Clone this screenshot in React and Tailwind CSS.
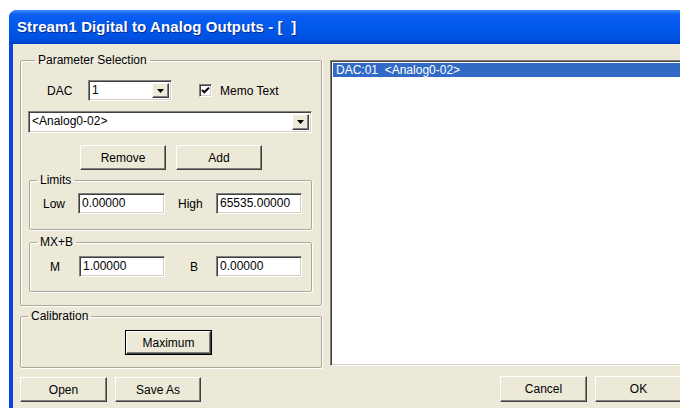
const sunken =
  'border border-t-[#808080] border-l-[#808080] border-r-white border-b-white shadow-[inset_1px_1px_0_#404040,inset_-1px_-1px_0_#d4d0c8]'
const raised =
  'border border-t-white border-l-white border-r-[#404040] border-b-[#404040] shadow-[inset_-1px_-1px_0_#808080] bg-[#ece9d8]'

function Button({ children, className = '', isDefault = false }) {
  if (isDefault) {
    return (
      <div className={`border border-black ${className}`}>
        <div className={`${raised} flex h-full w-full items-center justify-center`}>{children}</div>
      </div>
    )
  }
  return <div className={`${raised} flex items-center justify-center ${className}`}>{children}</div>
}

function Arrow() {
  return (
    <div className={`${raised} flex h-full w-[17px] items-center justify-center`}>
      <svg width="7" height="4" viewBox="0 0 7 4">
        <path d="M0 0h7L3.5 4z" fill="#000" />
      </svg>
    </div>
  )
}

function Combo({ value, className = '' }) {
  return (
    <div className={`${sunken} flex bg-white p-[2px] ${className}`}>
      <div className="flex-1 pl-[1px] leading-[15px]">{value}</div>
      <Arrow />
    </div>
  )
}

function Field({ value, className = '' }) {
  return (
    <div className={`${sunken} bg-white pl-[3px] leading-[19px] ${className}`}>{value}</div>
  )
}

function Group({ title, className = '', children }) {
  return (
    <fieldset
      className={`rounded-[2px] border border-[#aca899] shadow-[inset_1px_1px_0_white,1px_1px_0_white] ${className}`}
    >
      <legend className="ml-[7px] px-[3px] leading-[14px]">{title}</legend>
      {children}
    </fieldset>
  )
}

export default function App() {
  return (
    <div
      className="h-[408px] w-[680px] overflow-hidden bg-white pl-[9px] pt-[10px] text-[12px] text-black"
      style={{ fontFamily: '"Liberation Sans", Arial, sans-serif' }}
    >
      <div className="flex h-[420px] w-[700px] flex-col overflow-hidden rounded-tl-[8px] bg-[#0a45dc]">
        {/* caption */}
        <div className="flex h-[34px] items-center bg-[linear-gradient(to_bottom,#3c8dfb,#0a5df0_14%,#0058ea_55%,#0050e0_85%,#0042cc)] pl-[8px]">
          <span className="whitespace-pre text-[15px] font-bold tracking-[0.1px] text-white [text-shadow:1px_1px_0_#0a2a8a]">
            Stream1 Digital to Analog Outputs - [  ]
          </span>
        </div>

        <div className="ml-[4px] flex flex-1 gap-[8px] bg-[#ece9d8] pl-[7px] pt-[9px]">
          {/* left column */}
          <div className="flex w-[302px] flex-col">
            <Group title="Parameter Selection" className="h-[253px] px-[7px]">
              <div className="mt-[13px] flex h-[21px] items-center">
                <span className="ml-[19px] w-[41px]">DAC</span>
                <Combo value="1" className="h-[21px] w-[84px]" />
                <div className={`${sunken} ml-[27px] h-[13px] w-[13px] bg-white`}>
                  <svg width="11" height="11" viewBox="0 0 11 11" className="block">
                    <polyline points="2,5 4.3,7.3 9,2.6" fill="none" stroke="#000" strokeWidth="2" />
                  </svg>
                </div>
                <span className="ml-[8px]">Memo Text</span>
              </div>
              <Combo value="<Analog0-02>" className="mt-[10px] h-[22px] w-[284px]" />
              <div className="mt-[12px] flex h-[25px] justify-center gap-[10px]">
                <Button className="w-[86px]">Remove</Button>
                <Button className="w-[86px]">Add</Button>
              </div>
              <Group title="Limits" className="ml-[1px] mt-[3px] h-[57px] w-[283px]">
                <div className="mt-[6px] flex items-center">
                  <span className="ml-[13px] w-[35px]">Low</span>
                  <Field value="0.00000" className="h-[21px] w-[87px]" />
                  <span className="ml-[13px] w-[38px]">High</span>
                  <Field value="65535.00000" className="h-[21px] w-[86px]" />
                </div>
              </Group>
              <Group title="MX+B" className="ml-[1px] mt-[5px] h-[57px] w-[283px]">
                <div className="mt-[7px] flex items-center">
                  <span className="ml-[20px] w-[29px]">M</span>
                  <Field value="1.00000" className="h-[21px] w-[86px]" />
                  <span className="ml-[25px] w-[26px]">B</span>
                  <Field value="0.00000" className="h-[21px] w-[86px]" />
                </div>
              </Group>
            </Group>

            <Group title="Calibration" className="mt-[3px] h-[59px]">
              <div className="mt-[7px] flex pl-[104px]">
                <Button isDefault className="h-[25px] w-[87px]">
                  Maximum
                </Button>
              </div>
            </Group>

            <div className="mt-[9px] flex gap-[8px]">
              <Button className="h-[25px] w-[87px]">Open</Button>
              <Button className="h-[25px] w-[86px]">Save As</Button>
            </div>
          </div>

          {/* right column */}
          <div className="flex w-[362px] flex-col pt-[7px]">
            <div className={`${sunken} h-[306px] bg-white p-[2px]`}>
              <div className="h-[14px] whitespace-pre bg-[#316ac5] pl-[3px] leading-[14px] text-white">
                DAC:01  {'<Analog0-02>'}
              </div>
            </div>
            <div className="mt-[10px] flex justify-end gap-[8px] pr-[10px]">
              <Button className="h-[26px] w-[87px]">Cancel</Button>
              <Button className="h-[26px] w-[87px]">OK</Button>
            </div>
          </div>
        </div>
      </div>
    </div>
  )
}
